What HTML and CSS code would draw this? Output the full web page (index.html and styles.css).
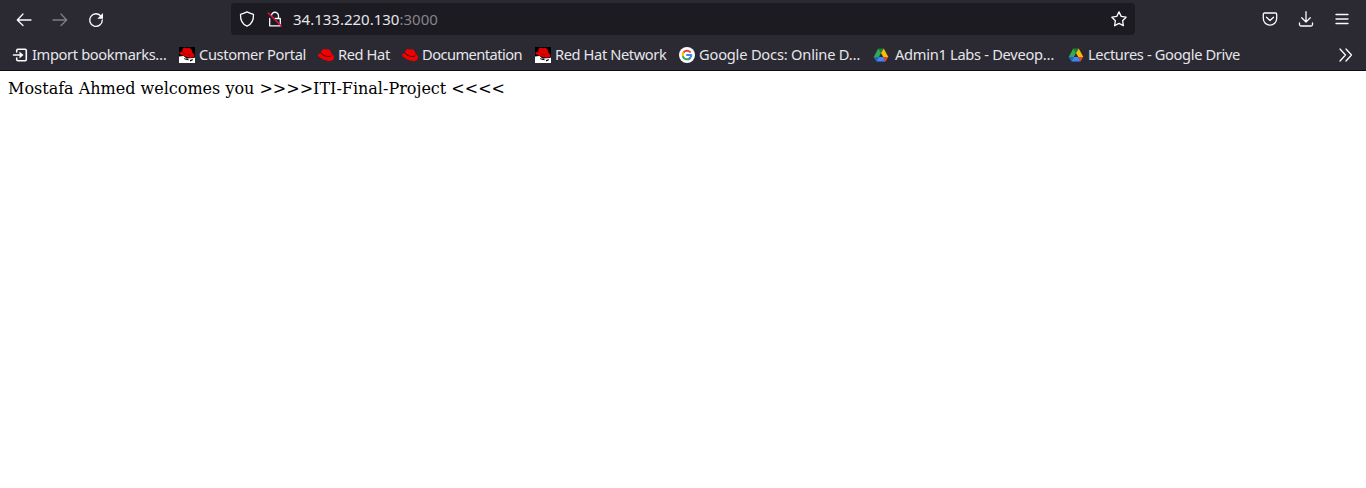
FILE: index.html
```
<!DOCTYPE html>
<html lang="en">
<head>
<meta charset="utf-8">
<title>34.133.220.130:3000</title>
<link rel="stylesheet" href="styles.css">
</head>
<body>
<svg class="defs" aria-hidden="true">
  <symbol id="hat" viewBox="0 0 16 16"><path fill="#f40000" d="M3.500 4 5 2l3 .5 2-.3c2 .2 3.200 2 3.700 4.800 1.500.8 2.300 2 2.300 3.500 0 2.700-2.500 3.700-5 3.400C6.500 13.200 2 11.200.2 8.700-.2 7.200 1 6.300 3 6.300z"/><path fill="none" stroke="#300" stroke-width="1" d="M3.300 6.200c.7 2.300 7.700 4.500 10 2.500"/></symbol>
  <symbol id="shadowman" viewBox="0 0 16 16"><path fill="#000" d="M0 0h16v16H0z"/><path fill="#fff" d="M0 9.500 4.500 9l3 2.500 7-.5 1.500-.5V16H0z"/><path fill="#e00000" d="M3.500 2 5 .5 8 1.200 10 .7l2.500 1.500 1 3.500 2 2-.5 2.300-3.500.8L6 9.500 1 7.200.3 5.500l2.900-.7z"/><path fill="none" stroke="#700" stroke-width=".6" d="m3.500 5 3 2.200 5 .7"/><path d="m5 11 2 .7 2 .1 1 1.500-2-.3-2.500-.8zM11 13l3-1-.5 1.500-2.500 1z"/></symbol>
  <symbol id="drive" viewBox="0 0 16 16"><path fill="#188038" d="M5.200 1.500h5.600L8 6z"/><path fill="#34a853" d="M5.200 1.500 8 6l-4.300 8L.7 10z"/><path fill="#fbbc04" d="M10.800 1.500 15.300 10h-5L8 6z"/><path fill="#4285f4" d="M5.800 10h4.500l2.200 4.500h-9z"/><path fill="#1967d2" d="M.7 10h5.100l-2.300 4.500z"/><path fill="#ea4335" d="M10.300 10h5l-2.800 4.500z"/></symbol>
</svg>
<header class="browser">
  <nav class="toolbar">
    <div class="navigation">
      <svg class="icon" viewBox="0 0 16 16"><path d="M15 8H1.500M7 2 1.300 8 7 13.500"/></svg>
      <svg class="icon disabled" viewBox="0 0 16 16"><path d="M1 8h13.500M9 2l5.700 6L9 13.500"/></svg>
      <svg class="icon" viewBox="0 0 16 16"><path d="M13.200 4.500A6.300 6.300 0 1 0 14.300 8"/><path class="solid" d="M15 1v5.700H9.300z"/></svg>
    </div>
    <div class="address">
      <svg class="icon" viewBox="0 0 16 16"><path d="M8 .9C6 2 3.800 2.700 1.500 3.300 1.300 9 3.500 13.500 8 15.200c4.500-1.700 6.700-6.200 6.500-11.900C12.200 2.700 10 2 8 .9z"/></svg>
      <svg class="icon" viewBox="0 0 16 16"><path d="M4.500 4.500a3.500 3.500 0 0 1 7 .5v2M2.700 7.500v7.300h10.600V7.500H8"/><path class="slash" d="m1.300 2 13 13"/></svg>
      <span class="url">34.133.220.130<span class="port">:3000</span></span>
      <svg class="icon star" viewBox="0 0 16 16"><path d="m8 .9 2.200 4.500 4.900.8-3.500 3.500.8 5L8 12.400l-4.400 2.300.8-5L.9 6.200l4.900-.8z"/></svg>
    </div>
    <div class="actions">
      <svg class="icon" viewBox="0 0 16 16"><path d="M2.500 2h11c.7 0 1.200.5 1.200 1.200v4.300a6.700 6.700 0 0 1-13.400 0V3.200c0-.7.5-1.200 1.200-1.200zM4.500 6.200 8 9.500l3.500-3.300"/></svg>
      <svg class="icon" viewBox="0 0 16 16"><path d="M8 .700v10.300M3.700 6.700 8 11l4.300-4.300M1.500 11.800v1.700c0 1 .5 1.500 1.500 1.500h10c1 0 1.500-.5 1.500-1.500v-1.700"/></svg>
      <svg class="icon" viewBox="0 0 16 16"><path d="M2 3.500h12M2 8h12M2 12.500h12"/></svg>
    </div>
  </nav>
  <nav class="bookmarks">
    <a class="bookmark import"><svg class="icon" viewBox="0 0 16 16"><path class="heavy" d="M4.700 5V3.500c0-.7.500-1.200 1.200-1.200h7.200c.7 0 1.200.5 1.200 1.200v9c0 .7-.5 1.200-1.200 1.200H5.900c-.7 0-1.200-.5-1.200-1.200V11M1.500 8H9"/><path class="solid" d="M7.500 4.500 11.500 8l-4 3.500z"/></svg><span>Import bookmarks…</span></a>
    <a class="bookmark portal"><svg class="icon"><use href="#shadowman"/></svg><span>Customer Portal</span></a>
    <a class="bookmark redhat"><svg class="icon"><use href="#hat"/></svg><span>Red Hat</span></a>
    <a class="bookmark docs"><svg class="icon"><use href="#hat"/></svg><span>Documentation</span></a>
    <a class="bookmark network"><svg class="icon"><use href="#shadowman"/></svg><span>Red Hat Network</span></a>
    <a class="bookmark google"><svg class="icon favicon" viewBox="0 0 16 16"><circle cx="8" cy="8" r="8" fill="#fff"/><g fill="none" stroke-width="2"><path stroke="#ea4335" d="M4.200 6A4.300 4.300 0 0 1 11 4.900"/><path stroke="#fbbc05" d="M4.200 10a4.300 4.300 0 0 1 0-4"/><path stroke="#34a853" d="M4.200 10a4.300 4.300 0 0 0 6.500 1.400"/><path stroke="#4285f4" d="M8 8h4.300a4.300 4.300 0 0 1-1.600 3.400"/></g></svg><span>Google Docs: Online D…</span></a>
    <a class="bookmark labs"><svg class="icon"><use href="#drive"/></svg><span>Admin1 Labs - Deveop…</span></a>
    <a class="bookmark lectures"><svg class="icon"><use href="#drive"/></svg><span>Lectures - Google Drive</span></a>
    <svg class="icon overflow" viewBox="0 0 16 16"><path d="m3 2 5.500 6L3 14M9 2l5.500 6L9 14"/></svg>
  </nav>
</header>
<main class="page">Mostafa Ahmed welcomes you &gt;&gt;&gt;&gt;ITI-Final-Project &lt;&lt;&lt;&lt;</main>
</body>
</html>
```
FILE: styles.css
```
body { margin: 0; background: #fff; }
.defs { display: none; }
.browser {
  box-sizing: border-box;
  height: 71px;
  background: #2b2a33;
  border-bottom: 1px solid #0c0c0d;
  color: #e6e6ea;
  font-family: "Noto Sans", sans-serif;
  font-size: 14.67px;
}
.toolbar { display: flex; height: 38px; align-items: center; }
.icon { display: block; flex: none; width: 16px; height: 16px; }
.icon path { stroke-linecap: round; stroke-linejoin: round; }
.toolbar .icon, .import .icon, .overflow { fill: none; stroke: #fbfbfe; stroke-width: 1.3; }
.icon .solid { fill: #fbfbfe; stroke: none; }
.icon .heavy { stroke-width: 1.6; }
.icon .slash { stroke: #e2143c; stroke-width: 1.5; }
.toolbar .disabled { opacity: .4; }
.navigation { display: flex; gap: 20px; width: 215px; padding: 1px 0 0 16px; }
.address {
  box-sizing: border-box;
  display: flex;
  align-items: center;
  width: 904px;
  height: 32px;
  padding: 0 8px;
  gap: 12px;
  border-radius: 4px;
  background: #1c1b22;
}
.url { margin-left: -2px; font-size: 15px; line-height: 20px; white-space: nowrap; }
.port { color: #85848b; }
.star { margin-left: auto; }
.actions { display: flex; gap: 20px; margin-left: 127px; }
.bookmarks { box-sizing: border-box; display: flex; align-items: center; height: 32px; padding: 2px 13px 0 12px; }
.bookmark { display: flex; align-items: center; gap: 4px; height: 20px; white-space: nowrap; line-height: 18px; letter-spacing: -.36px; }
.bookmark span { height: 20px; }
.import { width: 167px; }
.portal { width: 139px; }
.redhat { width: 84px; letter-spacing: -.4px; }
.docs { width: 133px; letter-spacing: -.55px; }
.network { width: 144px; letter-spacing: -.4px; }
.google { width: 194px; letter-spacing: -.2px; }
.labs { width: 195px; gap: 6px; letter-spacing: -.3px; }
.overflow { margin-left: auto; }
.page { padding: 8px; color: #000; font: 16px/19px "DejaVu Serif", serif; }
```
